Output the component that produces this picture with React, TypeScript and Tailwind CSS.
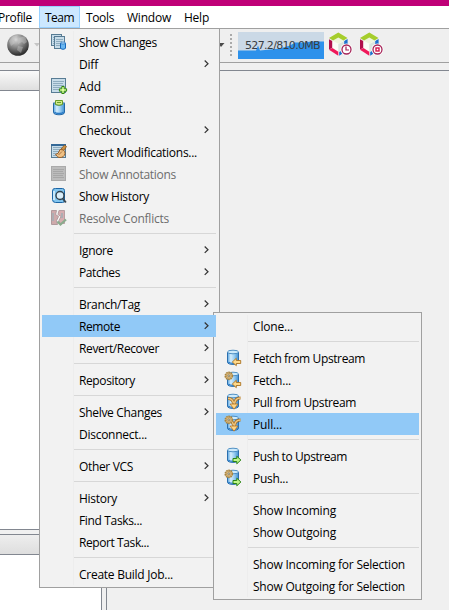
import { useLayoutEffect, useRef, useState, type ReactNode } from 'react';

/* Text fitted to a given advance width through letter spacing. */
function Label({ text, width, className = '' }: { text: string; width: number; className?: string }) {
  const ref = useRef<HTMLSpanElement>(null);
  const [spacing, setSpacing] = useState(0);
  useLayoutEffect(() => {
    if (ref.current) {
      setSpacing((width - ref.current.getBoundingClientRect().width) / text.length);
    }
  }, [text, width]);
  return (
    <span ref={ref} className={`inline-block whitespace-nowrap ${className}`} style={{ letterSpacing: spacing }}>
      {text}
    </span>
  );
}

function Svg({ children }: { children: ReactNode }) {
  return (
    <svg width="18" height="18" viewBox="0 0 18 18" fill="none">
      <defs>
        <linearGradient id="cyl" x1="0" x2="1" y1="0" y2="0">
          <stop offset="0" stopColor="#5aa5e0" />
          <stop offset=".3" stopColor="#d4edfc" />
          <stop offset=".6" stopColor="#9ccff2" />
          <stop offset="1" stopColor="#3f8fd2" />
        </linearGradient>
      </defs>
      {children}
    </svg>
  );
}

function Sheet({ x, y, w, h, gray = false }: { x: number; y: number; w: number; h: number; gray?: boolean }) {
  const line = gray ? '#a2a2a2' : '#7f9fb4';
  return (
    <>
      <rect x={x + 0.5} y={y + 0.5} width={w - 1} height={h - 1} fill={gray ? '#bcbcbc' : '#c7dce9'} stroke={gray ? '#aaa' : '#587c94'} />
      {[3, 5, 7, 9, 11].filter((d) => d < h - 2).map((d) => (
        <path key={d} d={`M${x + 2} ${y + d + 0.5}h${w - (d % 4 === 1 ? 5 : 4)}`} stroke={line} strokeWidth=".8" />
      ))}
    </>
  );
}

function Cylinder() {
  return (
    <>
      <path d="M3.5 3v10.3c0 2.8 11 2.8 11 0V3" fill="url(#cyl)" stroke="#2b6fae" />
      <path d="M4.5 13c1 1.7 8 1.7 9 0" stroke="#2c7cc8" strokeWidth="1.3" />
      <ellipse cx="9" cy="3" rx="5.5" ry="1.8" fill="#cdeafb" stroke="#4186bd" strokeWidth=".9" />
    </>
  );
}

function Gear() {
  return (
    <>
      <circle cx="4.8" cy="4.8" r="3.6" fill="#dfc08a" stroke="#a8843f" strokeWidth="1.5" strokeDasharray="1.6 .7" />
      <circle cx="4.8" cy="4.8" r="2.5" stroke="#c09a58" fill="#e6cb98" />
      <circle cx="4.8" cy="4.8" r="1.1" fill="#a8c2cc" stroke="#94713a" strokeWidth=".7" />
    </>
  );
}

const fetchArrow = <path d="M8.3 13 12.3 9.3v2.2h4.4v3h-4.4v2.2Z" fill="#ffd98a" stroke="#ad7422" strokeWidth=".9" />;
const pushArrow = <path d="M16.9 13 12.8 9.2v2.3H9v3h3.800v2.300Z" fill="#bff58a" stroke="#2a8414" />;
const pullArrow = (
  <>
    <path d="M4 5.500q5 0 5.500 5M16.500 5q-5.500 0-6 6" stroke="#a16c25" strokeWidth="3" />
    <path d="M4 5.500q5 0 5.500 5M16.500 5q-5.500 0-6 6" stroke="#f0c67f" strokeWidth="1.500" />
    <path d="M6 11h8l-4 5.200Z" fill="#ffd585" stroke="#b07224" strokeWidth=".8" />
  </>
);

const icons: Record<string, ReactNode> = {
  changes: (
    <Svg>
      <Sheet x={1} y={1} w={11} h={12} />
      <Sheet x={4} y={3} w={11} h={13} />
      <path d="M10.5 10v5c0 1.7 5 1.7 5 0v-5" fill="#69b6f1" stroke="#1767b9" />
      <ellipse cx="13" cy="10" rx="2.5" ry="1" fill="#cceaff" stroke="#2574c0" strokeWidth=".8" />
    </Svg>
  ),
  add: (
    <Svg>
      <Sheet x={1} y={1} w={15} h={15} />
      <path d="M11.8 9.5h2.4v2.3h2.4v2.4h-2.4v2.3h-2.4v-2.3H9.4v-2.4h2.4Z" fill="#dcff9e" stroke="#318710" />
    </Svg>
  ),
  commit: (
    <Svg>
      <path d="M3.500 4v9.500c0 3 11 3 11 0V4Z" fill="url(#cyl)" stroke="#2367a6" />
      <path d="M4.500 13c1 2 8 2 9 0" stroke="#2c7cc8" strokeWidth="1.300" />
      <path d="M3.500 4q5.500 5 11 0" fill="#9ccdec" stroke="#4e91bd" />
      <path d="M5.500 1.500h7v4q-3.500 1.500-7 0Z" fill="#d1eb8c" stroke="#6a9d29" />
      <path d="M7 3.500h4" stroke="#6a9d29" />
    </Svg>
  ),
  revert: (
    <Svg>
      <Sheet x={1} y={1} w={15} h={14} />
      <path d="M1 2h15" stroke="#346998" strokeWidth="2" />
      <path d="m11 6 3.500-4 2 1.500-2.500 4Z" fill="#ce9142" stroke="#7d4c1d" strokeWidth=".7" />
      <path d="M5.500 11.500q3 0 4.500-5 5 0 5 4-1 4.500-6 4-1 0-3.500-3Z" fill="#efc083" stroke="#9a622d" />
      <path d="m8.500 12 3.500-3.500" stroke="#8e542a" strokeWidth=".7" />
    </Svg>
  ),
  annotations: (
    <Svg>
      <Sheet x={1} y={1} w={15} h={15} gray />
    </Svg>
  ),
  history: (
    <Svg>
      <path d="M2.500 4q0-3 3-2.500h7q2 0 2 2v10q0 2-2 2h-7q-3 0-3-3Z" fill="#82c5ef" stroke="#1b65a5" />
      <path d="M4 4v9" stroke="#e1f5ff" strokeWidth="1.500" />
      <circle cx="10" cy="8.500" r="4" fill="#d9eefa" stroke="#31424e" strokeWidth="1.400" />
      <path d="m12.800 11.500 3 4" stroke="#374651" strokeWidth="2" />
    </Svg>
  ),
  conflicts: (
    <Svg>
      <path d="M1.500 1.500h5l-1 4 3 2-2 4 1 4h-6Z" fill="#cfaaac" stroke="#b09a9d" />
      <path d="M9 1.500h5.500v13H10l-1-3 2-4-3-2Z" fill="#d6adb0" stroke="#b79fa2" />
      <path d="M3 4v8m9-8v5" stroke="#adadb2" strokeWidth="2" />
      <path d="m7.500 12.500 3 3 5.500-5" stroke="#8aab8d" strokeWidth="2.200" />
    </Svg>
  ),
  fetch: <Svg><Cylinder />{fetchArrow}</Svg>,
  fetchGear: <Svg><Cylinder /><Gear />{fetchArrow}</Svg>,
  pull: <Svg><Cylinder />{pullArrow}</Svg>,
  pullGear: <Svg><Cylinder />{pullArrow}<Gear /></Svg>,
  push: <Svg><Cylinder />{pushArrow}</Svg>,
  pushGear: <Svg><Cylinder /><Gear />{pushArrow}</Svg>,
};

type Entry = null | { t: string; w: number; icon?: string; more?: boolean; off?: boolean; on?: boolean };

const teamMenu: Entry[] = [
  { t: 'Show Changes', w: 78, icon: 'changes' },
  { t: 'Diff', w: 19, more: true },
  { t: 'Add', w: 22, icon: 'add' },
  { t: 'Commit...', w: 53, icon: 'commit' },
  { t: 'Checkout', w: 52, more: true },
  { t: 'Revert Modifications...', w: 118, icon: 'revert' },
  { t: 'Show Annotations', w: 97, icon: 'annotations', off: true },
  { t: 'Show History', w: 70, icon: 'history' },
  { t: 'Resolve Conflicts', w: 90, icon: 'conflicts', off: true },
  null,
  { t: 'Ignore', w: 34, more: true },
  { t: 'Patches', w: 41, more: true },
  null,
  { t: 'Branch/Tag', w: 61, more: true },
  { t: 'Remote', w: 41, more: true, on: true },
  { t: 'Revert/Recover', w: 80, more: true },
  null,
  { t: 'Repository', w: 56, more: true },
  null,
  { t: 'Shelve Changes', w: 83, more: true },
  { t: 'Disconnect...', w: 68 },
  null,
  { t: 'Other VCS', w: 54, more: true },
  null,
  { t: 'History', w: 38, more: true },
  { t: 'Find Tasks...', w: 63 },
  { t: 'Report Task...', w: 70 },
  null,
  { t: 'Create Build Job...', w: 94 },
];

const remoteMenu: Entry[] = [
  { t: 'Clone...', w: 40 },
  null,
  { t: 'Fetch from Upstream', w: 112, icon: 'fetch' },
  { t: 'Fetch...', w: 38, icon: 'fetchGear' },
  { t: 'Pull from Upstream', w: 103, icon: 'pull' },
  { t: 'Pull...', w: 29, icon: 'pullGear', on: true },
  null,
  { t: 'Push to Upstream', w: 94, icon: 'push' },
  { t: 'Push...', w: 35, icon: 'pushGear' },
  null,
  { t: 'Show Incoming', w: 83 },
  { t: 'Show Outgoing', w: 83 },
  null,
  { t: 'Show Incoming for Selection', w: 152 },
  { t: 'Show Outgoing for Selection', w: 152 },
];

function Rows({ entries }: { entries: Entry[] }) {
  return (
    <>
      {entries.map((e, i) =>
        e === null ? (
          <div key={i} className="h-[10px] pt-1 pl-8">
            <div className="h-px bg-[#d7d7d7]" />
          </div>
        ) : (
          <div key={i} className={`flex h-[22px] items-center ${e.on ? 'bg-[#91c9f7]' : ''} ${e.off ? 'text-[#6d6d6d]' : 'text-black'}`}>
            <div className="flex w-[37px] shrink-0 pl-2">{e.icon && icons[e.icon]}</div>
            <Label text={e.t} width={e.w} className="pt-0.5" />
            {e.more && (
              <svg className="mr-[7px] ml-auto shrink-0" width="5" height="8" viewBox="0 0 5 8" fill="none">
                <path d="m.7.500 3.300 3.200L.7 6.900" stroke="#333" strokeWidth="1.200" />
              </svg>
            )}
          </div>
        ),
      )}
    </>
  );
}

function Cube({ stop = false }: { stop?: boolean }) {
  return (
    <svg width="25" height="25" viewBox="0 0 25 25" fill="none">
      <path d="M10.300 5 17 8.500v8.500l-6.700 4.500L4 17V8.500Z" fill="#fbfcf6" />
      <path d="m10.300 12 5.700-3v7.500l-5.700 4Z" fill="#dbe6df" />
      <path d="m4.500 8.500 5.800-3.500L16 8.500l-5.700 3.200Z" fill="#eef4dc" />
      <path d="M1 6 10.300.5 19.500 6l-4 2.500L10.300 5.500 5 8.500Z" fill="#a5cd2c" />
      <path d="M1 7.200 4.200 9v7L1 17.500Z" fill="#b0104a" />
      <path d="m1 17.700 3.400-1.700 5.900 3.800v3.900Z" fill="#f0185a" />
      <path d="M16.200 9 19.600 7v5h-3.400ZM11.200 20l3-1.800v3.600l-3 1.900Z" fill="#1b6fce" />
      <circle cx="18.500" cy="17.500" r="6" fill="#fff" />
      <circle cx="18.500" cy="17.500" r="4.500" fill="#fff" stroke="#a52357" strokeWidth="1.300" />
      {stop ? (
        <rect x="17" y="16" width="3" height="3" fill="#fff" stroke="#d7174b" strokeWidth="1.400" />
      ) : (
        <path d="M18 14.500V18h3" stroke="#a52357" strokeWidth="1.200" />
      )}
    </svg>
  );
}

export default function App() {
  return (
    <div className="relative flex h-[610px] w-[449px] flex-col overflow-hidden bg-[#f0f0f0] font-['Open_Sans','Noto_Sans',sans-serif] text-[12px] leading-4 text-black">
      <div className="h-1.5 shrink-0 bg-[#bf0077]" />
      <nav className="flex h-[22px] shrink-0 items-center bg-white">
        <div className="-ml-0.5 w-[41px] pt-0.5"><Label text="Profile" width={34} /></div>
        <div className="flex h-[22px] w-[41px] items-center border border-[#99d1ff] bg-[#cce8ff] pt-0.5 pl-[5px]"><Label text="Team" width={29} /></div>
        <div className="w-[41px] pt-0.5 pl-1.5"><Label text="Tools" width={28} /></div>
        <div className="w-[57px] pt-0.5 pl-1.5"><Label text="Window" width={44} /></div>
        <div className="pt-0.5 pl-1.5"><Label text="Help" width={25} /></div>
      </nav>
      <div className="flex h-[35px] shrink-0 items-start border-t border-b border-t-[#a0a0a0] border-b-[#a0a0a0] bg-[#efefef]">
        <svg width="40" height="33" viewBox="0 0 40 33">
          <defs>
            <radialGradient id="globe" cx=".4" cy=".25" r=".75">
              <stop stopColor="#d8d8d8" />
              <stop offset=".5" stopColor="#858585" />
              <stop offset="1" stopColor="#292929" />
            </radialGradient>
          </defs>
          <circle cx="18" cy="16" r="10.800" fill="url(#globe)" />
          <path d="m9 12 4-5 5-1-2 4-3 1 2 3-4 3Zm10-3 6-2 2 6-3 2-2-2-4 2Zm-1 8 5 1-2 6-4-3Z" fill="#ccc" opacity=".4" />
          <path d="M34 14h6l-3 3.500Z" fill="#c5c5c5" />
        </svg>
        <div className="flex h-[33px] w-[198px] justify-end">
          <svg width="20" height="33" viewBox="0 0 20 33">
            <path d="M0 14h6.500L3 18Z" fill="#4b4b4b" />
            <path d="M13 5v23" stroke="#aaa" strokeWidth="2" strokeDasharray="2 2" />
          </svg>
        </div>
        <div className="relative mt-[3px] flex h-[27px] w-[86px] items-center justify-center bg-[#cbd9e6]">
          <svg className="absolute inset-0" width="86" height="27" viewBox="0 0 86 27">
            <path d="M0 18.500h18l2-5 2 5 20-2 10-3 5-3h10l6-1h13v18H0Z" fill="#2d91eb" />
          </svg>
          <span className="relative pl-[3px] font-['DejaVu_Sans',sans-serif] text-[11px] leading-[14px] text-[#383e44]"><Label text="527.2/810.0MB" width={75} className="-mt-0.5" /></span>
        </div>
        <div className="mt-[3px] ml-1 flex gap-1.5"><Cube /><Cube stop /></div>
      </div>

      <main className="flex min-h-0 flex-1 pt-[7px]">
        <div className="flex w-[102px] shrink-0 flex-col border-t border-r border-[#828790] bg-white">
          <div className="h-[20px] shrink-0 border-b border-[#828790] bg-linear-to-b from-[#fafafa] to-[#dedede]" />
          <div className="h-[438px] shrink-0" />
          <div className="h-[6px] shrink-0 border-y border-[#828790] bg-[#f0f0f0]" />
          <div className="h-[20px] shrink-0 border-b border-[#828790] bg-linear-to-b from-[#eee] to-[#dedede]" />
        </div>
        <div className="ml-1 flex-1 border-t border-l border-[#828790]" />
      </main>

      <div className="absolute top-[28px] left-[39px] h-[560px] w-[181px] border border-[#a0a0a0] bg-[#f2f2f2] py-[2px] pr-[3px] pl-[2px]">
        <div className="absolute top-0.5 bottom-0.5 left-[33px] w-px bg-[#ededed]" />
        <div className="relative"><Rows entries={teamMenu} /></div>
      </div>
      <div className="absolute top-[312px] left-[213px] h-[288px] w-[209px] border border-[#a0a0a0] bg-[#f2f2f2] p-[2px]">
        <div className="absolute top-0.5 bottom-0.5 left-[33px] w-px bg-[#ededed]" />
        <div className="relative"><Rows entries={remoteMenu} /></div>
      </div>
      <div className="absolute top-[315px] left-[213px] h-[22px] w-[3px] bg-[#91c9f7]" />
    </div>
  );
}
